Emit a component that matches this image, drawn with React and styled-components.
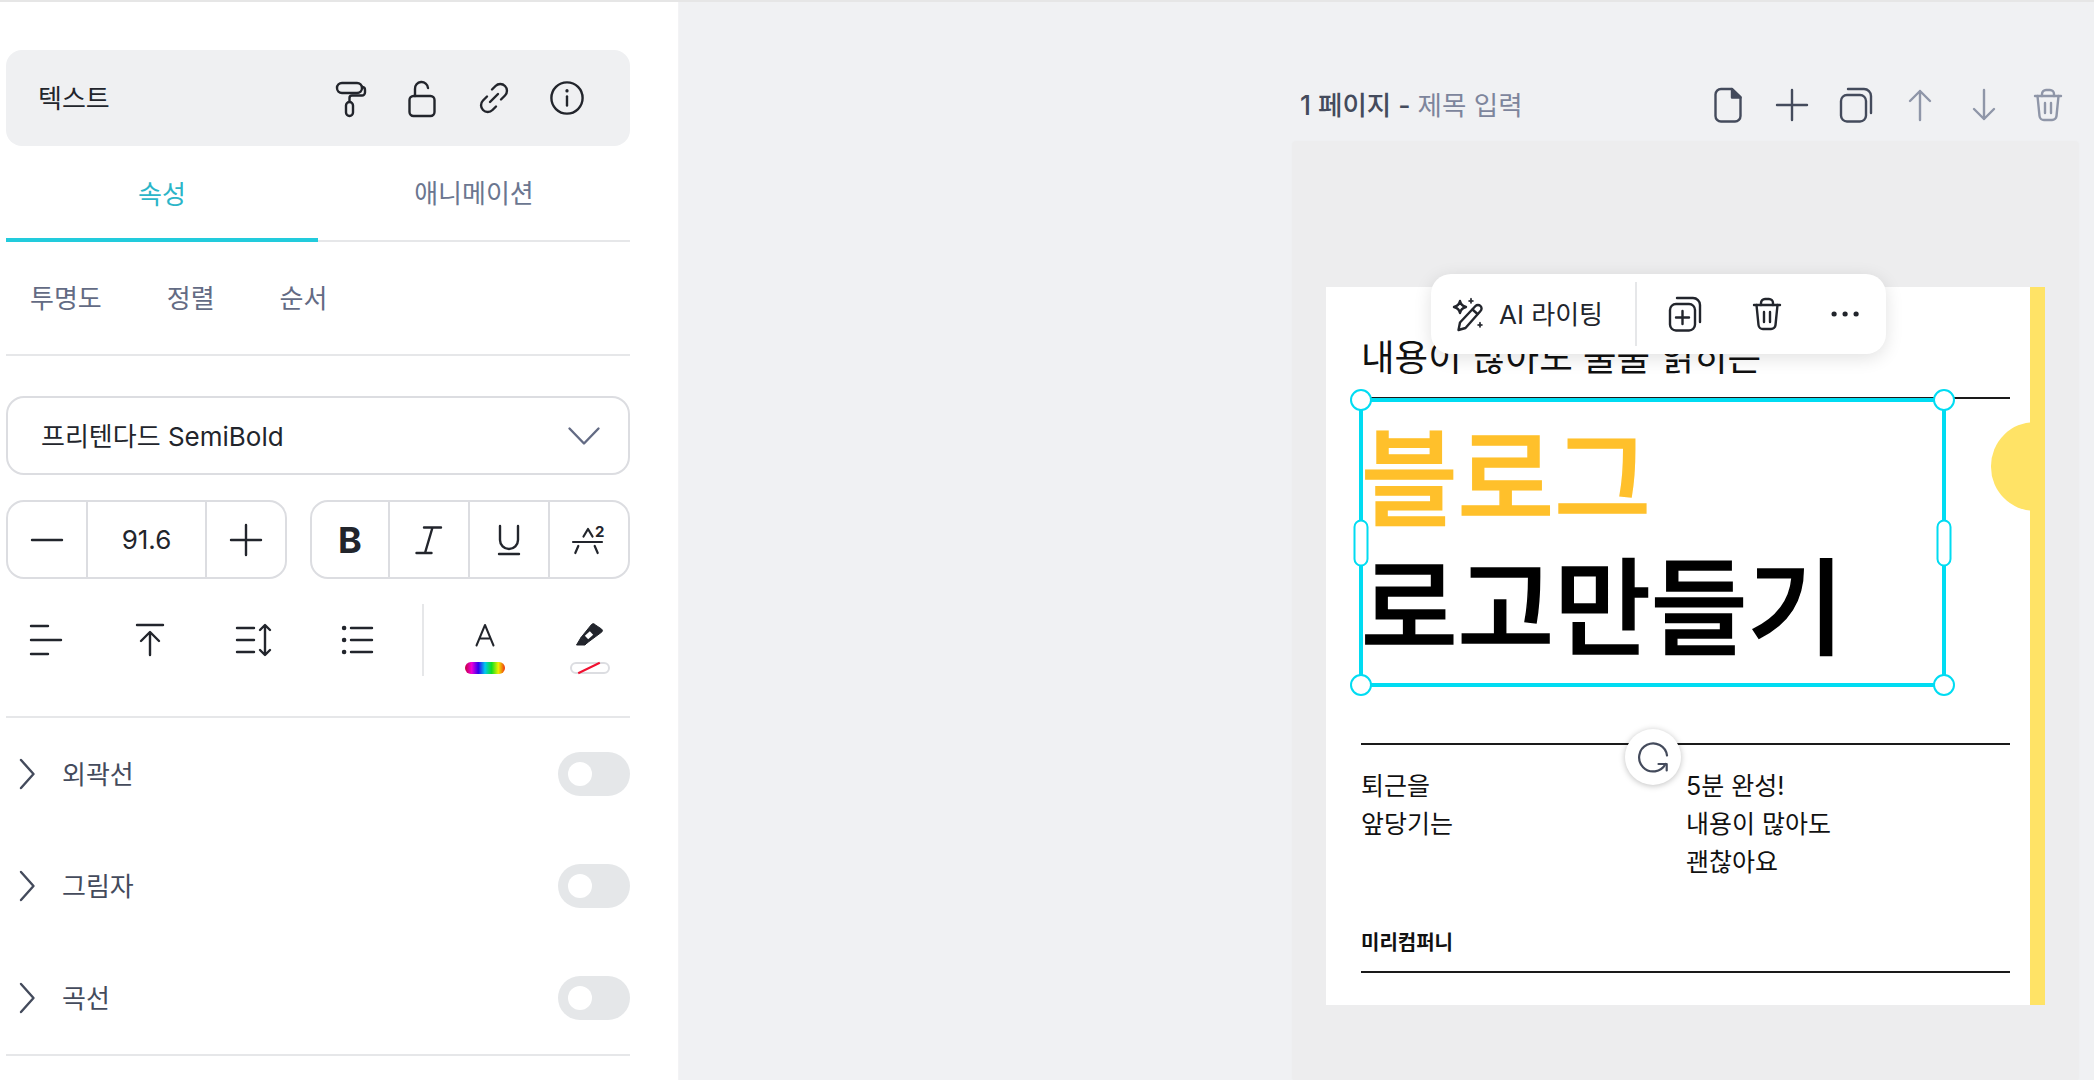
import React from 'react'
import styled, {createGlobalStyle} from 'styled-components'

const GlobalStyle = createGlobalStyle`
    html, body, #root {
        margin: 0;
        padding: 0;
        height: 100%;
    }
    body {
        font-family: Inter, "Noto Sans CJK KR", sans-serif;
        background: #f0f1f3;
        overflow: hidden;
    }
`

const colors = {
    ink: '#22252c',
    slate: '#444b5c',
    muted: '#636b84',
    faint: '#8f96a8',
    line: '#e6e7e9',
    edge: '#dcdde1',
    teal: '#22cbdc',
    cyan: '#00dcf2',
}

const Screen = styled.div`
    display: flex;
    width: 2094px;
    height: 1080px;
    border-top: 2px solid #e6e6e6;
    box-sizing: border-box;
    overflow: hidden;
`

const Panel = styled.aside`
    width: 679px;
    flex: none;
    box-sizing: border-box;
    padding: 48px 48px 0 6px;
    background: #fff;
    border-right: 1px solid #f3f3f5;
`

const Header = styled.div`
    display: flex;
    align-items: center;
    justify-content: space-between;
    height: 96px;
    padding: 0 46px 0 32px;
    box-sizing: border-box;
    background: #eff0f2;
    border-radius: 16px;
    font-size: 26px;
    color: ${colors.ink};
`

const HeaderLabel = styled.span`
    padding-bottom: 3px;
`

const HeaderIcons = styled.div`
    display: flex;
    gap: 40px;
    padding-top: 2px;
`

const Tabs = styled.div`
    display: flex;
    height: 96px;
    border-bottom: 2px solid ${colors.line};
    box-sizing: border-box;
`

const Tab = styled.div`
    flex: 1;
    display: flex;
    align-items: center;
    justify-content: center;
    font-size: 26px;
    color: ${p => p.$active ? '#2bb5c8' : '#6b7690'};
    border-bottom: ${p => p.$active ? `4px solid ${colors.teal}` : 'none'};
    margin-bottom: ${p => p.$active ? '-2px' : '0'};
    padding-bottom: ${p => p.$active ? '0' : '4px'};
`

const SubTabs = styled.div`
    display: flex;
    align-items: center;
    gap: 65px;
    height: 114px;
    padding: 0 0 4px 24px;
    box-sizing: border-box;
    border-bottom: 2px solid ${colors.line};
    font-size: 26px;
    color: ${colors.muted};
`

const FontSelect = styled.div`
    display: flex;
    align-items: center;
    justify-content: space-between;
    height: 79px;
    margin-top: 40px;
    padding: 0 28px 0 33px;
    box-sizing: border-box;
    border: 2px solid ${colors.edge};
    border-radius: 18px;
    font-size: 26px;
    color: ${colors.ink};
`

const SelectLabel = styled.span`
    padding-bottom: 3px;
`

const Controls = styled.div`
    display: flex;
    justify-content: space-between;
    margin-top: 25px;
`

const Group = styled.div`
    display: flex;
    width: ${p => p.$width}px;
    height: 79px;
    box-sizing: border-box;
    border: 2px solid ${colors.edge};
    border-radius: 18px;
`

const Cell = styled.div`
    display: flex;
    align-items: center;
    justify-content: center;
    flex: ${p => p.$wide ? '1' : 'none'};
    width: ${p => p.$wide ? 'auto' : `${p.$width || 78}px`};
    font-size: 26px;
    color: ${colors.ink};
    & + & {
        border-left: 2px solid ${colors.edge};
    }
`

const BoldMark = styled.span`
    font-size: 36px;
    font-weight: 700;
    line-height: 1;
`

const Tools = styled.div`
    display: flex;
    align-items: center;
    height: 72px;
    margin-top: 25px;
    padding-bottom: 40px;
    border-bottom: 2px solid ${colors.line};
`

const Tool = styled.div`
    display: flex;
    justify-content: center;
    width: 104px;
    flex: none;
    margin-left: ${p => p.$first ? '-12px' : '0'};
`

const ToolRule = styled.div`
    width: 2px;
    height: 72px;
    flex: none;
    margin-left: 12px;
    background: ${colors.line};
`

const Swatches = styled.div`
    display: flex;
    flex: 1;
    align-self: flex-start;
    justify-content: space-between;
    padding: 19px 20px 0 41px;
`

const ColorTool = styled.div`
    display: flex;
    flex-direction: column;
    align-items: center;
    justify-content: space-between;
    width: 40px;
    height: 51px;
`

const Rainbow = styled.div`
    width: 40px;
    height: 12px;
    border-radius: 6px;
    background: linear-gradient(90deg, #c4003c, #f000d8, #3000f0, #00c8f0, #10e020, #f0f000, #f03010);
`

const NoColor = styled.div`
    position: relative;
    width: 40px;
    height: 12px;
    box-sizing: border-box;
    border: 2px solid ${colors.edge};
    border-radius: 6px;
    &::after {
        content: "";
        position: absolute;
        left: 5px;
        top: 3px;
        width: 24px;
        height: 2px;
        background: #f01030;
        transform: rotate(-26deg);
    }
`

const ToggleRow = styled.div`
    display: flex;
    align-items: center;
    height: 112px;
    font-size: 26px;
    color: ${colors.slate};
`

const RowLabel = styled.span`
    flex: 1;
    margin-left: 27px;
    padding-bottom: 4px;
`

const Chevron = styled.span`
    display: flex;
    margin-left: 13px;
`

const Toggle = styled.div`
    display: flex;
    align-items: center;
    width: 72px;
    height: 44px;
    padding-left: 10px;
    box-sizing: border-box;
    border-radius: 22px;
    background: #e5e7e9;
    &::before {
        content: "";
        width: 24px;
        height: 24px;
        border-radius: 50%;
        background: #fff;
    }
`

const PanelEnd = styled.div`
    border-top: 2px solid ${colors.line};
`

const Canvas = styled.main`
    flex: 1;
    padding-left: 613px;
    background: #f0f1f3;
`

const PageColumn = styled.div`
    width: 787px;
`

const PageBar = styled.div`
    display: flex;
    align-items: center;
    justify-content: space-between;
    height: 139px;
    padding: 67px 0 0 8px;
    box-sizing: border-box;
`

const PageTitle = styled.div`
    padding-bottom: 4px;
    font-size: 26.5px;
    font-weight: 500;
    color: ${colors.slate};
`

const TitleHint = styled.span`
    font-weight: 400;
    color: #7d859c;
`

const PageActions = styled.div`
    display: grid;
    grid-template-columns: repeat(6, 64px);
    justify-items: center;
    align-items: center;
    margin-right: -1px;
`

const PageCard = styled.div`
    height: 940px;
    padding: 146px 34px 0;
    box-sizing: border-box;
    background: #ededee;
    border-radius: 4px;
    box-shadow: 0 0 3px rgba(0, 0, 0, 0.02);
`

const Artboard = styled.div`
    position: relative;
    width: 719px;
    height: 718px;
    box-sizing: border-box;
    padding: 0 20px 0 35px;
    background: #fff;
    border-right: 15px solid #ffe366;
`

const Bump = styled.div`
    position: absolute;
    right: -5px;
    top: 135px;
    width: 44px;
    height: 89px;
    border-radius: 44px 0 0 44px;
    background: #ffe366;
`

const FloatBar = styled.div`
    position: absolute;
    left: 105px;
    top: -13px;
    display: flex;
    align-items: center;
    width: 455px;
    height: 80px;
    border-radius: 20px;
    background: #fff;
    box-shadow: 0 4px 18px rgba(0, 0, 0, 0.12);
    font-size: 26px;
    color: ${colors.ink};
    z-index: 3;
`

const AiButton = styled.div`
    display: flex;
    align-items: center;
    gap: 10px;
    width: 206px;
    height: 64px;
    padding-left: 22px;
    box-sizing: border-box;
    border-right: 2px solid ${colors.line};
`

const AiLabel = styled.span`
    padding-bottom: 3px;
`

const FloatIcons = styled.div`
    display: flex;
    flex: 1;
    align-items: center;
    justify-content: space-between;
    padding: 0 27px 0 31px;
`

const Eyebrow = styled.div`
    padding-top: 54px;
    height: 110px;
    box-sizing: border-box;
    font-size: 36.5px;
    line-height: 34px;
    color: #111;
    white-space: nowrap;
`

const Rule = styled.div`
    height: 2px;
    background: #1a1a1a;
`

const Headline = styled.div`
    position: relative;
    height: 344px;
    font-size: 105px;
    font-weight: 500;
    line-height: 129px;
    white-space: nowrap;
`

const HeadlineText = styled.div`
    padding-top: 15px;
    color: #000;
    -webkit-text-stroke: 1.5px currentColor;
`

const Accent = styled.span`
    display: block;
    color: #ffc02b;
`

const Selection = styled.div`
    position: absolute;
    left: -2px;
    top: -1px;
    width: 587px;
    height: 289px;
    box-sizing: border-box;
    border: 4px solid ${colors.cyan};
`

const Handle = styled.span`
    position: absolute;
    left: ${p => p.$right ? 'calc(100% + 2px)' : '-2px'};
    top: ${p => p.$y};
    width: ${p => p.$tall ? '15px' : '22px'};
    height: ${p => p.$tall ? '47px' : '22px'};
    box-sizing: border-box;
    border: 2px solid ${colors.cyan};
    border-radius: 12px;
    background: #fff;
    transform: translate(-50%, -50%);
`

const Rotate = styled.div`
    position: absolute;
    left: 299px;
    top: 442px;
    display: flex;
    align-items: center;
    justify-content: center;
    width: 56px;
    height: 56px;
    border-radius: 50%;
    background: #fff;
    box-shadow: 0 1px 6px rgba(0, 0, 0, 0.25);
    z-index: 2;
`

const Columns = styled.div`
    display: grid;
    grid-template-columns: 325px 1fr;
    height: 185px;
    padding-top: 22px;
    box-sizing: border-box;
    font-size: 25px;
    line-height: 38px;
    color: #111;
`

const Company = styled.div`
    font-size: 20px;
    font-weight: 700;
    line-height: 26px;
    margin-bottom: 15px;
    color: #111;
`

const Svg = styled.svg`
    display: block;
    flex: none;
    fill: none;
    overflow: visible;
    stroke: ${p => p.$color || colors.ink};
    stroke-width: ${p => p.$stroke || 2.4};
    stroke-linecap: round;
    stroke-linejoin: round;
`

const Icon = ({w = 32, h = 32, color, stroke, children}) => (
    <Svg width={w} height={h} viewBox={`0 0 ${w} ${h}`} $color={color} $stroke={stroke}>{children}</Svg>
)

const RollerIcon = () => (
    <Icon h={36}>
        <rect x="3" y="2" width="25" height="10" rx="5"/>
        <path d="M28 6h0.5a3 3 0 0 1 2.5 3v2.5a3 3 0 0 1-3 3H18a2.5 2.5 0 0 0-2.5 2.5v3.5"/>
        <rect x="12" y="21" width="7" height="14" rx="3.5"/>
    </Icon>
)

const LockIcon = () => (
    <Icon h={36}>
        <rect x="3.5" y="15" width="25" height="20" rx="4"/>
        <path d="M9 15V8a6.5 6.5 0 0 1 13-1"/>
    </Icon>
)

const LinkIcon = () => (
    <Icon h={34}>
        <path d="M14 8.500l3.500-3.500a6.500 6.500 0 0 1 9.500 9.500l-4 4"/>
        <path d="M18 25.500l-3.500 3.500a6.500 6.500 0 0 1-9.500-9.500l4-4"/>
        <path d="M20 13l-8 8"/>
    </Icon>
)

const InfoIcon = () => (
    <Icon w={34} h={34}>
        <circle cx="17" cy="17" r="15.600"/>
        <path d="M17 15.500v9"/>
        <path d="M17 9.600v0.400" strokeWidth="3.200"/>
    </Icon>
)

const CaretDown = () => (
    <Icon h={20} color="#636b84">
        <path d="M1.500 2.500L16 17.500L30.500 2.500"/>
    </Icon>
)

const CaretRight = () => (
    <Icon w={16} h={32} color={colors.slate}>
        <path d="M2 2l12.500 14L2 30"/>
    </Icon>
)

const MinusIcon = () => (
    <Icon><path d="M1 16h30"/></Icon>
)

const PlusIcon = ({color}) => (
    <Icon color={color}><path d="M1 16h30M16 1v30"/></Icon>
)

const ItalicIcon = () => (
    <Icon>
        <path d="M11 3.500h17M3.500 29h15M19.500 3.500L12 29"/>
    </Icon>
)

const UnderlineIcon = () => (
    <Icon>
        <path d="M7 2v14a9 9 0 0 0 18 0V2"/>
        <path d="M6 30h20"/>
    </Icon>
)

const StrikeIcon = () => (
    <Icon w={34} h={34} stroke={2.2}>
        <path d="M11.500 13.500L16 6l4.500 7.500"/>
        <path d="M1 19h29"/>
        <path d="M6.300 23l-3 7M25.700 30l-3-7"/>
        <text x="23" y="13.500" fontSize="15" fontWeight="700" stroke="none" fill={colors.ink} fontFamily="Inter">2</text>
    </Icon>
)

const AlignIcon = () => (
    <Icon h={34}>
        <path d="M1 3h17M1 17h30M1 31h17"/>
    </Icon>
)

const TopIcon = () => (
    <Icon h={34}>
        <path d="M3 2h26M16 32V10M7 18l9-9 9 9"/>
    </Icon>
)

const SpacingIcon = () => (
    <Icon w={36} h={34}>
        <path d="M1 5h17M1 17h17M1 29h17"/>
        <path d="M29 3v28M24 7l5-5 5 5M24 27l5 5 5-5"/>
    </Icon>
)

const ListIcon = () => (
    <Icon h={34}>
        <path d="M9 5h21M9 17h21M9 29h21"/>
        <path d="M2 5h0.200M2 17h0.200M2 29h0.200" strokeWidth="4.400"/>
    </Icon>
)

const LetterIcon = () => (
    <Icon w={20} h={23} stroke={2}>
        <path d="M1.500 22.500L10 2l8.500 20.500M4.500 15.500h11"/>
    </Icon>
)

const MarkerIcon = () => (
    <Icon w={28} h={23} stroke={1}>
        <path d="M18 1l7.500 5a2 2 0 0 1 .3 3L11 20 5 14.500 15.500 1.500A2 2 0 0 1 18 1z" fill={colors.ink}/>
        <path d="M5 14.500L0.500 22H9l2-2z" fill={colors.ink}/>
        <path d="M10.500 14.500l5-4.500" stroke="#fff" strokeWidth="5" strokeLinecap="butt"/>
    </Icon>
)

const PageIcon = () => (
    <Icon w={28} h={36} color={colors.slate}>
        <path d="M7 2h11l8.500 8v19a5.500 5.500 0 0 1-5.500 5.500H7A5.500 5.500 0 0 1 1.500 29V7.500A5.500 5.500 0 0 1 7 2z"/>
        <path d="M18 2v8.500h8.500z" fill={colors.slate}/>
    </Icon>
)

const CopyIcon = ({color = colors.slate, plus}) => (
    <Icon w={34} h={36} color={color}>
        <rect x="2" y="8" width="25" height="26.500" rx="6"/>
        <path d="M9 2h16a7 7 0 0 1 7 7v17"/>
        {plus && <path d="M14.500 15v13M8 21.500h13"/>}
    </Icon>
)

const ArrowUp = () => (
    <Icon w={24} h={32} color={colors.faint}>
        <path d="M12 31V2M2 12L12 2l10 10"/>
    </Icon>
)

const ArrowDown = () => (
    <Icon w={24} h={32} color={colors.faint}>
        <path d="M12 1v29M2 20l10 10 10-10"/>
    </Icon>
)

const TrashIcon = ({color = colors.faint}) => (
    <Icon w={30} h={34} color={color}>
        <path d="M2 8h26"/>
        <path d="M9 8V6a4 4 0 0 1 4-4h4a4 4 0 0 1 4 4v2"/>
        <path d="M4.500 8l2 20a4.500 4.500 0 0 0 4.500 4h8a4.500 4.500 0 0 0 4.500-4l2-20"/>
        <path d="M12 15v10M18 15v10"/>
    </Icon>
)

const WandIcon = () => (
    <Icon w={36} h={36} stroke={2.4}>
        <path d="M5.500 34l1.500-7.500L22.500 10a3.500 3.500 0 0 1 5 0 3.500 3.500 0 0 1 0 5L12.500 32z"/>
        <path d="M19.500 13.500l5 4.500"/>
        <path d="M7 5c.7 3.400 2.200 5 6 6-3.800 1-5.300 2.600-6 6-.7-3.400-2.200-5-6-6 3.800-1 5.300-2.600 6-6z"/>
        <path d="M18 2.500c.4 1.600 1 2.200 2.500 2.500-1.500.3-2.100.9-2.500 2.500-.4-1.600-1-2.200-2.500-2.500 1.500-.3 2.100-.9 2.500-2.500z" fill={colors.ink} strokeWidth="1"/>
        <path d="M27 26.500c.4 1.600 1 2.200 2.500 2.500-1.500.3-2.100.9-2.500 2.500-.4-1.600-1-2.200-2.500-2.500 1.500-.3 2.100-.9 2.500-2.500z" fill={colors.ink} strokeWidth="1"/>
    </Icon>
)

const DotsIcon = () => (
    <Icon w={28} h={8}>
        <path d="M3 4h0.200M14 4h0.200M25 4h0.200" strokeWidth="5"/>
    </Icon>
)

const RotateIcon = () => (
    <Icon h={32} color={colors.slate} stroke={2.2}>
        <path d="M30 14.500A14 14 0 1 0 28.500 23"/>
        <path d="M21.500 23h8.200v6.500"/>
    </Icon>
)

const rows = ['외곽선', '그림자', '곡선']

const App = () => {
    return (
        <Screen>
            <GlobalStyle/>
            <Panel>
                <Header>
                    <HeaderLabel>텍스트</HeaderLabel>
                    <HeaderIcons>
                        <RollerIcon/>
                        <LockIcon/>
                        <LinkIcon/>
                        <InfoIcon/>
                    </HeaderIcons>
                </Header>

                <Tabs>
                    <Tab $active>속성</Tab>
                    <Tab>애니메이션</Tab>
                </Tabs>

                <SubTabs>
                    <span>투명도</span>
                    <span>정렬</span>
                    <span>순서</span>
                </SubTabs>

                <FontSelect>
                    <SelectLabel>프리텐다드 SemiBold</SelectLabel>
                    <CaretDown/>
                </FontSelect>

                <Controls>
                    <Group $width={281}>
                        <Cell><MinusIcon/></Cell>
                        <Cell $wide>91.6</Cell>
                        <Cell><PlusIcon/></Cell>
                    </Group>
                    <Group $width={320}>
                        <Cell $width={76}><BoldMark>B</BoldMark></Cell>
                        <Cell><ItalicIcon/></Cell>
                        <Cell><UnderlineIcon/></Cell>
                        <Cell $wide><StrikeIcon/></Cell>
                    </Group>
                </Controls>

                <Tools>
                    <Tool $first><AlignIcon/></Tool>
                    <Tool><TopIcon/></Tool>
                    <Tool><SpacingIcon/></Tool>
                    <Tool><ListIcon/></Tool>
                    <ToolRule/>
                    <Swatches>
                        <ColorTool>
                            <LetterIcon/>
                            <Rainbow/>
                        </ColorTool>
                        <ColorTool>
                            <MarkerIcon/>
                            <NoColor/>
                        </ColorTool>
                    </Swatches>
                </Tools>

                {rows.map(label => (
                    <ToggleRow key={label}>
                        <Chevron><CaretRight/></Chevron>
                        <RowLabel>{label}</RowLabel>
                        <Toggle/>
                    </ToggleRow>
                ))}
                <PanelEnd/>
            </Panel>

            <Canvas>
                <PageColumn>
                    <PageBar>
                        <PageTitle>1 페이지 - <TitleHint>제목 입력</TitleHint></PageTitle>
                        <PageActions>
                            <PageIcon/>
                            <PlusIcon color={colors.slate}/>
                            <CopyIcon/>
                            <ArrowUp/>
                            <ArrowDown/>
                            <TrashIcon/>
                        </PageActions>
                    </PageBar>

                    <PageCard>
                        <Artboard>
                            <Bump/>
                            <FloatBar>
                                <AiButton>
                                    <WandIcon/>
                                    <AiLabel>AI 라이팅</AiLabel>
                                </AiButton>
                                <FloatIcons>
                                    <CopyIcon color={colors.ink} plus/>
                                    <TrashIcon color={colors.ink}/>
                                    <DotsIcon/>
                                </FloatIcons>
                            </FloatBar>

                            <Eyebrow>내용이 많아도 술술 읽히는</Eyebrow>
                            <Rule/>
                            <Headline>
                                <HeadlineText>
                                    <Accent>블로그</Accent>
                                    로고만들기
                                </HeadlineText>
                                <Selection>
                                    <Handle $y="-2px"/>
                                    <Handle $right $y="-2px"/>
                                    <Handle $y="calc(100% + 2px)"/>
                                    <Handle $right $y="calc(100% + 2px)"/>
                                    <Handle $y="50%" $tall/>
                                    <Handle $right $y="50%" $tall/>
                                </Selection>
                            </Headline>
                            <Rotate><RotateIcon/></Rotate>
                            <Rule/>
                            <Columns>
                                <div>퇴근을<br/>앞당기는</div>
                                <div>5분 완성!<br/>내용이 많아도<br/>괜찮아요</div>
                            </Columns>
                            <Company>미리컴퍼니</Company>
                            <Rule/>
                        </Artboard>
                    </PageCard>
                </PageColumn>
            </Canvas>
        </Screen>
    )
}

export default App
